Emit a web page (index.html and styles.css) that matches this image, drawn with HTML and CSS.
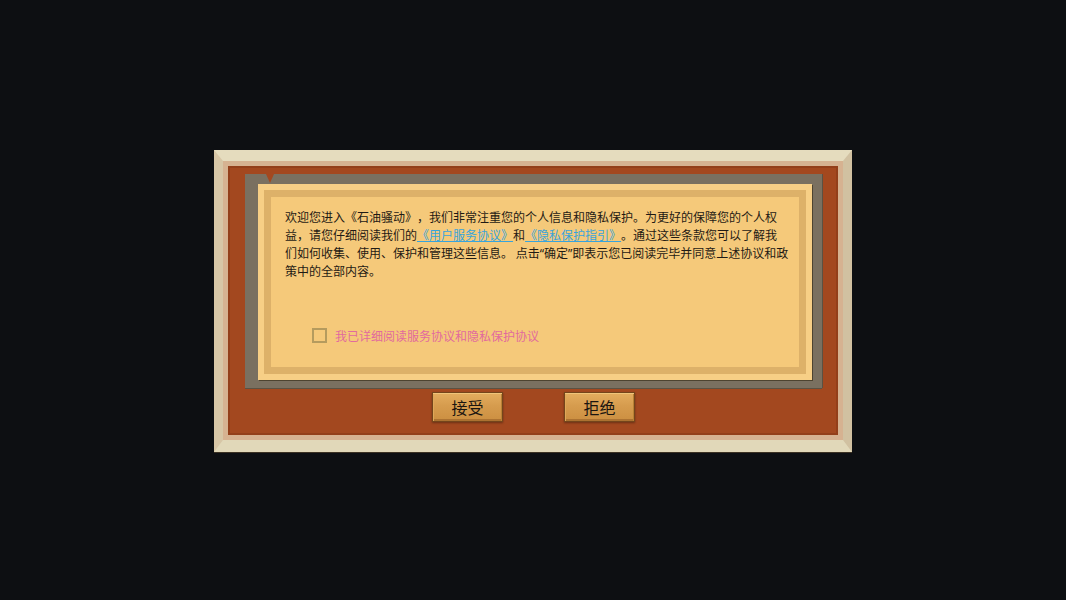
FILE: index.html
```html
<!DOCTYPE html>
<html lang="zh-CN">
<head>
<meta charset="utf-8">
<title>用户协议</title>
<link rel="stylesheet" href="styles.css">
</head>
<body>
<div class="stage">
  <div class="frame">
    <div class="mat">
      <div class="felt">
        <div class="board">
          <span class="clip"></span>
          <div class="sheet">
            <div class="sheet-body">
              <p class="terms">欢迎您进入《石油骚动》，我们非常注重您的个人信息和隐私保护。为更好的保障您的个人权<br>益，请您仔细阅读我们的<a class="link" href="#">《用户服务协议》</a>和<a class="link" href="#">《隐私保护指引》</a>。通过这些条款您可以了解我<br>们如何收集、使用、保护和管理这些信息。 点击<span class="quote">“</span>确定<span class="quote">”</span>即表示您已阅读完毕并同意上述协议和政<br>策中的全部内容。</p>
              <label class="agree">
                <span class="box"></span>
                <span class="agree-text">我已详细阅读服务协议和隐私保护协议</span>
              </label>
            </div>
          </div>
        </div>
        <div class="actions">
          <button class="btn" type="button">接受</button>
          <button class="btn" type="button">拒绝</button>
        </div>
      </div>
    </div>
  </div>
</div>
</body>
</html>
```

FILE: styles.css
```css
html, body {
  margin: 0;
  height: 100%;
}

body {
  background: #0d0f12;
  font-family: "Noto Sans CJK SC", "Noto Sans", sans-serif;
}

.stage {
  height: 600px;
  box-sizing: border-box;
  padding-top: 2px;
  display: flex;
  align-items: center;
  justify-content: center;
}

/* bevelled wooden frame */
.frame {
  width: 638px;
  box-sizing: border-box;
  border-style: solid;
  border-width: 11px 9px 12px 9px;
  border-color: #e5dcbe #d1c1a1 #e1d8b9 #d7c6a6;
  box-shadow: 0 1px 0 #3b3123;
}

.mat {
  border: 5px solid #d6b291;
}

.felt {
  background: #a3481f;
  box-shadow: inset 0 0 0 2px #933f1a;
  padding: 8px 16px 13px 17px;
}

/* grey backing board behind the paper */
.board {
  position: relative;
  background: #7a7060;
  padding: 10px 10px 8px 13px;
  box-shadow: 0 1px 0 #5b5243, 1px 0 0 #5b5243;
}

.clip {
  position: absolute;
  left: 21px;
  top: 0;
  width: 0;
  height: 0;
  border-left: 4px solid transparent;
  border-right: 4px solid transparent;
  border-top: 9px solid #a3481f;
}

.sheet {
  height: 196px;
  box-sizing: border-box;
  background: #f7cf86;
  padding: 6px;
  box-shadow: 1px 1px 0 #4d4330;
}

.sheet-body {
  height: 100%;
  box-sizing: border-box;
  border: 7px solid #ddb169;
  background: #f5c97a;
  padding: 11px 14px 0;
}

.terms {
  margin: 0;
  font-size: 12px;
  line-height: 18px;
  color: #1f1a14;
  white-space: nowrap;
  text-spacing-trim: space-all;
}

/* narrow western-style quotation marks */
.quote {
  font-family: "Noto Sans", sans-serif;
  line-height: 0;
}

.link {
  color: #38a4dc;
  text-decoration: underline;
}

.agree {
  display: flex;
  align-items: center;
  gap: 8px;
  margin: 48px 0 0 27px;
  height: 15px;
}

.box {
  width: 15px;
  height: 15px;
  box-sizing: border-box;
  border: 2px solid #b59b5e;
}

.agree-text {
  font-size: 12px;
  line-height: 15px;
  color: #e26a9e;
}

.actions {
  display: flex;
  justify-content: center;
  gap: 61px;
  margin-top: 4px;
}

.btn {
  width: 71px;
  height: 30px;
  padding: 0;
  box-sizing: border-box;
  border: 1px solid #74451b;
  background: linear-gradient(#e4ad5f, #d69c4e 45%, #cc8f41);
  box-shadow: inset 0 1px 0 #f0c47a, inset 1px 0 0 #dfa85a, inset -1px 0 0 #b98034, inset 0 -2px 0 #ac7231, 0 1px 2px rgba(0, 0, 0, 0.35);
  font-family: "Noto Sans CJK SC", "Noto Sans", sans-serif;
  font-size: 16px;
  line-height: 27px;
  color: #1a1510;
  cursor: pointer;
}
```
